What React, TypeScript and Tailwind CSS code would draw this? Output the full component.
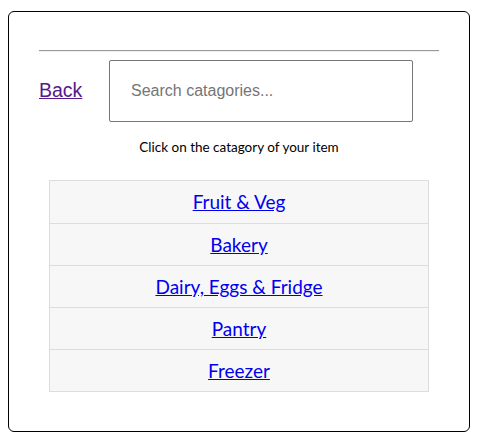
import React from "react";

const CATEGORIES = ["Fruit & Veg", "Bakery", "Dairy, Eggs & Fridge", "Pantry", "Freezer"];

export default function App() {
  return (
    <div className="pt-[11px] pl-[8px] pr-[10px] pb-[11px] bg-white">
      <div className="h-[421px] border border-black rounded-[6px] px-[30px] pt-[38px]">
        <div className="w-[400px] h-[2px] border-t border-[#9a9a9a] border-b border-b-[#eeeeee]" />

        <div className="flex items-center mt-[8px]">
          <a
            href="#"
            className="text-[19.5px] text-[#551a8b] underline w-[70px] font-['Liberation_Sans',Arial,sans-serif]"
          >
            Back
          </a>
          <input
            type="text"
            placeholder="Search catagories..."
            className="w-[304px] h-[62px] border border-[#767676] rounded-[2px] px-[21px] text-[16px] font-['Liberation_Sans',Arial,sans-serif] placeholder:text-[#757575] outline-none"
          />
        </div>

        <p className="text-center text-[13.5px] text-black mt-[15px] font-['Lato',sans-serif]">
          Click on the catagory of your item
        </p>

        <div className="w-[380px] ml-[10px] mt-[23px] border border-[#dddddd] bg-[#f7f7f7]">
          {CATEGORIES.map((c, i) => (
            <div
              key={c}
              className={`h-[42px] flex items-center justify-center ${i > 0 ? "border-t border-[#dddddd]" : ""}`}
            >
              <a href="#" className="text-[19px] text-[#0000ee] underline font-['Lato',sans-serif]">
                {c}
              </a>
            </div>
          ))}
        </div>
      </div>
    </div>
  );
}
